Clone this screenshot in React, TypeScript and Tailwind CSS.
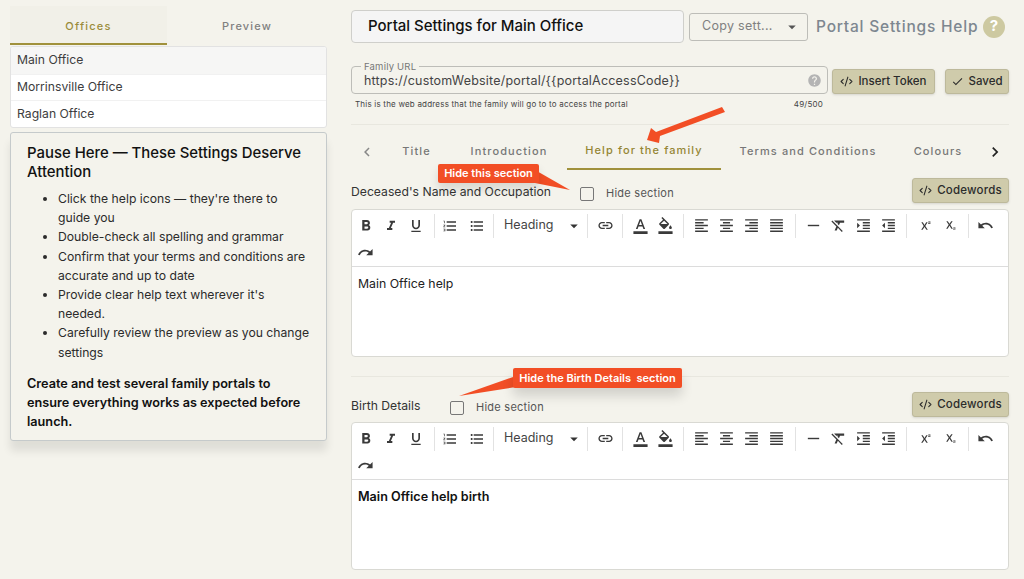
import React from 'react';
import {
  MdFormatBold, MdFormatItalic, MdFormatUnderlined, MdFormatListNumbered, MdFormatListBulleted,
  MdLink, MdFormatColorText, MdFormatColorFill, MdFormatAlignLeft, MdFormatAlignCenter, MdFormatAlignRight,
  MdFormatAlignJustify, MdHorizontalRule, MdFormatClear, MdFormatIndentIncrease, MdFormatIndentDecrease,
  MdSuperscript, MdSubscript, MdUndo, MdRedo, MdCheck, MdChevronLeft, MdChevronRight, MdArrowDropDown, MdHelp,
} from 'react-icons/md';
import { CodeXml } from 'lucide-react';

const font = { fontFamily: 'Inter, "Liberation Sans", sans-serif' };

const Sep = ({ className }: { className: string }) => <div className={`w-px h-[24px] bg-[#e2e2e2] ${className}`} />;

const Tool = ({ icon: Icon, size = 17 }: { icon: any; size?: number }) => (
  <div className="w-[25px] h-[28px] flex items-center justify-center text-[#3a3a3a]"><Icon size={size} /></div>
);

const Toolbar = () => (
  <div className="border-b border-[#dcdcdc]">
    <div className="flex items-center h-[29px] pl-px pt-[2px]">
      <Tool icon={MdFormatBold} size={18} /><Tool icon={MdFormatItalic} size={16} /><Tool icon={MdFormatUnderlined} size={16} />
      <Sep className="ml-[6px] mr-[2px]" />
      <Tool icon={MdFormatListNumbered} size={16} /><div className="w-[2px]" /><Tool icon={MdFormatListBulleted} size={16} />
      <Sep className="ml-[4px] mr-[2px]" />
      <div className="w-[91px] flex items-center justify-between pl-[8px] pr-[4px] text-[12.5px] text-[#444]">
        <span>Heading</span><MdArrowDropDown size={18} className="text-[#333]" />
      </div>
      <Sep className="mr-[5px]" />
      <Tool icon={MdLink} />
      <Sep className="ml-[4px] mr-[5px]" />
      <Tool icon={MdFormatColorText} /><Tool icon={MdFormatColorFill} />
      <Sep className="ml-[5px] mr-[5px]" />
      <Tool icon={MdFormatAlignLeft} /><Tool icon={MdFormatAlignCenter} /><Tool icon={MdFormatAlignRight} /><Tool icon={MdFormatAlignJustify} />
      <Sep className="ml-[6px] mr-[5px]" />
      <Tool icon={MdHorizontalRule} /><Tool icon={MdFormatClear} /><Tool icon={MdFormatIndentIncrease} /><Tool icon={MdFormatIndentDecrease} />
      <Sep className="ml-[5px] mr-[5px]" />
      <Tool icon={MdSuperscript} size={13} /><Tool icon={MdSubscript} size={13} />
      <Sep className="ml-[6px] mr-[4px]" />
      <Tool icon={MdUndo} />
    </div>
    <div className="flex items-center h-[27px] pl-px"><Tool icon={MdRedo} /></div>
  </div>
);

const Codewords = () => (
  <button className="w-[97px] h-[25px] flex items-center justify-center gap-[5px] pt-px bg-[#cfcbab] border border-[#bdb99b] rounded-[3px] shadow-sm text-[11.5px] font-medium text-[#2b2b2b] tracking-[0.2px]">
    <CodeXml size={13} />Codewords
  </button>
);

const Editor = ({ children, height }: { children: React.ReactNode; height: string }) => (
  <div className={`bg-white border border-[#d9d9d3] rounded-[4px] ${height}`}>
    <Toolbar />
    <div className="px-[6px] pt-[8px] text-[12.3px] leading-[18px] text-[#222]">{children}</div>
  </div>
);

const HideSection = () => (
  <label className="flex items-center gap-[12px] text-[11px] tracking-[0.25px] text-[#555]">
    <span className="w-[14px] h-[14px] border-[1.5px] border-[#777] rounded-[2px]" />Hide section
  </label>
);

const offices = ['Main Office', 'Morrinsville Office', 'Raglan Office'];
const tips = [
  "Click the help icons — they're there to guide you",
  'Double-check all spelling and grammar',
  'Confirm that your terms and conditions are accurate and up to date',
  "Provide clear help text wherever it's needed.",
  'Carefully review the preview as you change settings',
];
const tabs = [
  { label: 'Title', w: 'w-[69px]' },
  { label: 'Introduction', w: 'w-[116px]' },
  { label: 'Help for the family', w: 'w-[154px]', active: true },
  { label: 'Terms and Conditions', w: 'w-[174px]' },
  { label: 'Colours', w: 'w-[86px]' },
];

export default function App() {
  return (
    <div className="relative w-[1024px] h-[579px] overflow-hidden bg-[#f4f3ec] flex" style={font}>
      <aside className="w-[317px] ml-[10px] mt-[6px] shrink-0">
        <div className="flex h-[39px] text-[11px] font-medium tracking-[1.2px]">
          <div className="w-[157px] flex items-center justify-center pt-[3px] bg-[#f1f0e8] border-b-2 border-[#a0913c] text-[#9a8c3a]">Offices</div>
          <div className="flex-1 flex items-center justify-center text-[#808080] pt-[1px]">Preview</div>
        </div>
        <div className="mt-px border border-[#e2e2e2] rounded-[3px] bg-white text-[12.2px] text-[#3d3d3d] overflow-hidden">
          {offices.map((o, i) => (
            <div key={o} className={`h-[26.5px] flex items-center px-[6px] ${i === 0 ? 'bg-[#f6f6f5]' : 'border-t border-[#f1f1f1]'}`}>{o}</div>
          ))}
        </div>
        <div className="mt-[4.5px] h-[309px] border border-[#c5cacb] rounded-[3px] bg-[#f4f3ec] shadow-[0_10px_8px_rgba(0,0,0,0.09)] pl-[16px] pr-[12px] pt-[11px]">
          <h2 className="text-[14.9px] leading-[19px] font-medium text-[#111]">Pause Here — These Settings Deserve Attention</h2>
          <ul className="list-disc pl-[31px] pr-[4px] mt-[7px] text-[12.2px] leading-[19.2px] text-[#2b2b2b]">
            {tips.map(t => <li key={t}>{t}</li>)}
          </ul>
          <p className="mt-[12px] text-[12.7px] leading-[19.3px] font-semibold text-[#111]">Create and test several family portals to ensure everything works as expected before launch.</p>
        </div>
      </aside>

      <main className="w-[658px] ml-[24px] shrink-0">
        <div className="flex items-center mt-[10px] h-[33px]">
          <div className="w-[333px] h-[33px] flex items-center pl-[16px] bg-[#f5f5f5] border border-[#cfcfcb] rounded-[4px] text-[15px] font-medium text-[#111]">Portal Settings for Main Office</div>
          <div className="ml-[5px] w-[119px] h-[28px] flex items-center justify-between pl-[12px] pr-[6px] border border-[#bdbdb8] rounded-[3px] text-[12.5px] tracking-[0.3px] text-[#808080]">
            Copy sett...<MdArrowDropDown size={18} className="text-[#555]" />
          </div>
          <div className="ml-[8px] w-[163px] text-[15.5px] font-medium tracking-[0.8px] text-[#7d8790] whitespace-nowrap">Portal Settings Help</div>
          <div className="ml-[4px] w-[22px] h-[22px] rounded-full bg-[#cdc9a1] flex items-center justify-center text-white text-[15px] font-bold">?</div>
        </div>

        <div className="flex items-center mt-[23px] h-[28px]">
          <div className="relative w-[477px] h-[28px] flex items-center justify-between pl-[12px] pr-[5px] border border-[#bdbdb8] rounded-[4px] text-[12.5px] tracking-[0.2px] text-[#444]">
            <span className="absolute -top-[6px] left-[9px] px-[3px] bg-[#f4f3ec] text-[9.5px] leading-[11px] text-[#777]">Family URL</span>
            <span className="pt-[3px]">{'https://customWebsite/portal/{{portalAccessCode}}'}</span>
            <MdHelp size={15} className="text-[#b4b4b4]" />
          </div>
          <button className="ml-[4px] mt-[2px] w-[103px] h-[25px] flex items-center justify-center gap-[5px] pt-px bg-[#cfcbab] border border-[#bdb99b] rounded-[3px] shadow-sm text-[11.5px] font-medium text-[#2b2b2b]"><CodeXml size={13} />Insert Token</button>
          <button className="ml-[10px] mt-[2px] w-[64px] h-[25px] flex items-center justify-center gap-[4px] pt-px bg-[#cfcbab] border border-[#bdb99b] rounded-[3px] shadow-sm text-[11.5px] font-medium text-[#2b2b2b]"><MdCheck size={13} />Saved</button>
        </div>

        <div className="flex mt-[4px] pl-[4px] w-[472px] justify-between text-[8px] leading-[12px] tracking-[0.2px] text-[#444]">
          <span>This is the web address that the family will go to to access the portal</span><span>49/500</span>
        </div>
        <div className="mt-[14px] h-px bg-[#e8e7df]" />

        <div className="flex items-center h-[45px] text-[11px] font-medium tracking-[1.1px] text-[#777]">
          <div className="w-[31px] flex justify-center pt-[8px] text-[#888]"><MdChevronLeft size={18} /></div>
          {tabs.map(t => (
            <div key={t.label} className={`${t.w} h-[45px] flex items-center justify-center pt-[8px] ${t.active ? 'border-b-2 border-[#a0913c] text-[#948634]' : ''}`}>{t.label}</div>
          ))}
          <div className="flex-1 flex justify-center pt-[8px] text-[#222]"><MdChevronRight size={20} /></div>
        </div>

        <div className="flex items-center mt-[7px] h-[26px]">
          <span className="w-[229px] pt-[4px] text-[12.2px] text-[#333]">Deceased's Name and Occupation</span>
          <div className="pt-[7px]"><HideSection /></div>
          <div className="ml-auto"><Codewords /></div>
        </div>
        <div className="mt-[6px]">
          <Editor height="h-[148px]">Main Office help</Editor>
        </div>
        <div className="mt-[19px] h-px bg-[#e8e7df]" />

        <div className="flex items-center mt-[14px] h-[26px]">
          <span className="w-[99px] pt-[4px] text-[12.2px] text-[#333]">Birth Details</span>
          <div className="pt-[7px]"><HideSection /></div>
          <div className="ml-auto"><Codewords /></div>
        </div>
        <div className="mt-[5px]">
          <Editor height="h-[148px]"><strong className="font-semibold text-[12.6px] text-[#111]">Main Office help birth</strong></Editor>
        </div>
      </main>

      {/* annotations */}
      <svg className="absolute inset-0 pointer-events-none" width="1024" height="579" viewBox="0 0 1024 579">
        <path d="M722 107 L725 112 L660 136 L659 143 L647 140 L651 128 L656 132 Z" fill="#f24e25" />
        <path d="M535 170 L570 190 L535 183 Z" fill="#f24e25" />
        <path d="M516 376 L459 396 L516 387 Z" fill="#f24e25" />
      </svg>
      <div className="absolute left-[438px] top-[164px] w-[101px] h-[19px] flex items-center justify-center rounded-[2px] bg-[#f24e25] text-white text-[11px] font-semibold shadow-[0_6px_10px_rgba(0,0,0,0.12)]">Hide this section</div>
      <div className="absolute left-[513px] top-[368px] w-[169px] h-[20px] flex items-center justify-center rounded-[2px] bg-[#f24e25] text-white text-[11px] font-semibold whitespace-pre shadow-[0_8px_12px_rgba(0,0,0,0.14)]">Hide the Birth Details  section</div>
    </div>
  );
}
